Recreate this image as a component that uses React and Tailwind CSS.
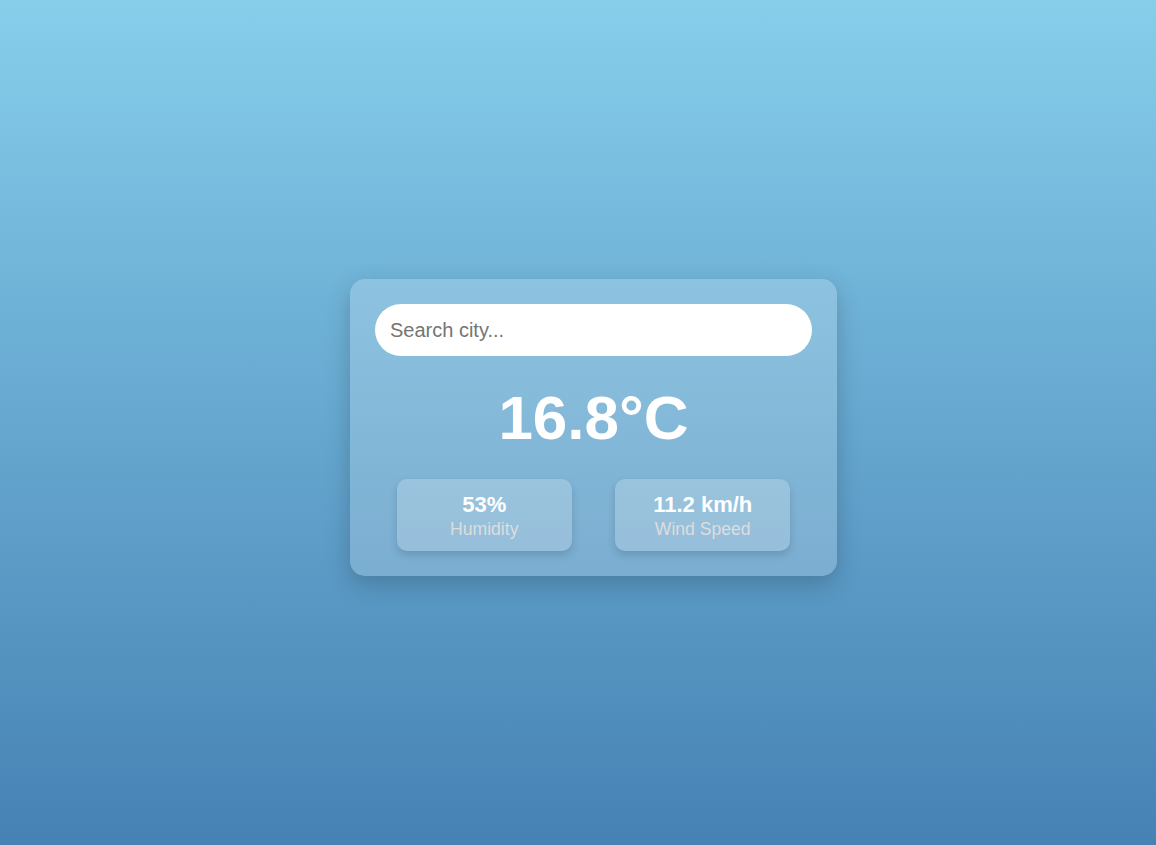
export default function App() {
  return (
    <div
      className="flex min-h-screen items-center justify-center bg-gradient-to-b from-[#87ceeb] to-[#4682b4] pl-[31px] pt-[10px]"
      style={{ fontFamily: '"Liberation Sans", Arial, sans-serif' }}
    >
      <div className="w-[487px] rounded-[15px] bg-white/20 p-[25px] text-center text-white shadow-[0_8px_24px_rgba(0,0,0,0.2)]">
        <input
          type="text"
          placeholder="Search city..."
          className="block h-[52px] w-full rounded-full bg-white px-[15px] text-[20px] text-[#333] outline-none placeholder:text-[#757575]"
        />
        <h1 className="mb-[26px] mt-[26px] text-[62px] font-bold leading-[1.15]">16.8°C</h1>
        <div className="flex justify-around">
          <div className="w-[40%] rounded-[10px] bg-white/20 pb-[12px] pt-[13px] shadow-[0_4px_8px_rgba(0,0,0,0.15)]">
            <p className="text-[22px] font-bold leading-[1.15]">53%</p>
            <p className="mt-px text-[17.6px] leading-[1.15] text-[#ddd]">Humidity</p>
          </div>
          <div className="w-[40%] rounded-[10px] bg-white/20 pb-[12px] pt-[13px] shadow-[0_4px_8px_rgba(0,0,0,0.15)]">
            <p className="text-[22px] font-bold leading-[1.15]">11.2 km/h</p>
            <p className="mt-px text-[17.6px] leading-[1.15] text-[#ddd]">Wind Speed</p>
          </div>
        </div>
      </div>
    </div>
  );
}
